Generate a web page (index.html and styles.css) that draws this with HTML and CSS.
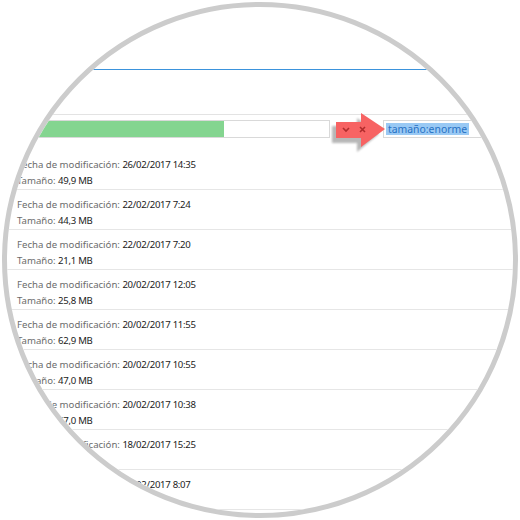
FILE: index.html
```html
<!DOCTYPE html>
<html lang="es">
<head>
<meta charset="utf-8">
<link rel="stylesheet" href="styles.css">
</head>
<body>
<div class="lens">
  <div class="titlebar"></div>
  <div class="toolbar">
    <div class="address"><div class="progress"></div></div>
    <div class="search"><span class="query">tamaño:enorme</span></div>
  </div>
  <svg class="arrow" width="60" height="46" viewBox="0 0 60 46">
    <defs>
      <filter id="blur" x="-20%" y="-20%" width="140%" height="140%"><feGaussianBlur stdDeviation="1.2"/></filter>
    </defs>
    <polygon points="3,14 28,14 28,6 50,22 28,40 28,31 3,31" fill="#000" opacity="0.28" filter="url(#blur)"/>
    <polygon points="7,10 32,10 32,1 56,17 32,35 32,26 7,26" fill="#f76363"/>
    <polyline points="14,16 17,19 20,16" fill="none" stroke="#b02c2c" stroke-width="1.6"/>
    <path d="M31,15 L36,20 M36,15 L31,20" stroke="#b02c2c" stroke-width="1.6"/>
  </svg>
  <ul class="list">
    <li class="row"><p><span class="k">Fecha de modificación:</span> <span class="v">26/02/2017 14:35</span></p><p><span class="k">Tamaño:</span> <span class="v">49,9 MB</span></p></li>
    <li class="row"><p><span class="k">Fecha de modificación:</span> <span class="v">22/02/2017 7:24</span></p><p><span class="k">Tamaño:</span> <span class="v">44,3 MB</span></p></li>
    <li class="row"><p><span class="k">Fecha de modificación:</span> <span class="v">22/02/2017 7:20</span></p><p><span class="k">Tamaño:</span> <span class="v">21,1 MB</span></p></li>
    <li class="row"><p><span class="k">Fecha de modificación:</span> <span class="v">20/02/2017 12:05</span></p><p><span class="k">Tamaño:</span> <span class="v">25,8 MB</span></p></li>
    <li class="row"><p><span class="k">Fecha de modificación:</span> <span class="v">20/02/2017 11:55</span></p><p><span class="k">Tamaño:</span> <span class="v">62,9 MB</span></p></li>
    <li class="row"><p><span class="k">Fecha de modificación:</span> <span class="v">20/02/2017 10:55</span></p><p><span class="k">Tamaño:</span> <span class="v">47,0 MB</span></p></li>
    <li class="row"><p><span class="k">Fecha de modificación:</span> <span class="v">20/02/2017 10:38</span></p><p><span class="k">Tamaño:</span> <span class="v">57,0 MB</span></p></li>
    <li class="row"><p><span class="k">Fecha de modificación:</span> <span class="v">18/02/2017 15:25</span></p><p><span class="k">Tamaño:</span> <span class="v">38,4 MB</span></p></li>
    <li class="row"><p><span class="k">Fecha de modificación:</span> <span class="v">17/02/2017 8:07</span></p><p><span class="k">Tamaño:</span> <span class="v">29,6 MB</span></p></li>
  </ul>
</div>
</body>
</html>
```
FILE: styles.css
```css
html, body {
  margin: 0;
  padding: 0;
  background: #ffffff;
}
.lens {
  position: relative;
  box-sizing: border-box;
  width: 516px;
  height: 516px;
  margin: 2px;
  border: 5px solid #cccccc;
  border-radius: 50%;
  overflow: hidden;
  background: #ffffff;
  font-family: "Noto Sans", "Open Sans", sans-serif;
  font-size: 9.6px;
}
.titlebar {
  height: 62px;
  border-bottom: 1px solid #3b93dc;
}
.toolbar {
  margin-top: 44px;
  border-top: 1px solid #e3e3e3;
  padding-top: 5px;
  display: flex;
  gap: 53px;
}
.address {
  box-sizing: border-box;
  width: 323px;
  height: 18px;
  border: 1px solid #d9d9d9;
  border-left: none;
}
.progress {
  width: 217px;
  height: 16px;
  background: #84d590;
}
.search {
  flex: 1;
  box-sizing: border-box;
  height: 18px;
  border: 1px solid #d9d9d9;
  border-right: none;
  padding: 2px 0 0 2px;
  font-size: 10.4px;
  line-height: 12px;
}
.query {
  display: inline-block;
  background: #99c9f4;
  color: #2771c4;
  padding: 0 2px;
}
.arrow {
  position: absolute;
  left: 322px;
  top: 105px;
}
.list {
  list-style: none;
  margin: 12px 0 0;
  padding: 0;
}
.row {
  box-sizing: border-box;
  height: 40px;
  padding: 7px 0 0 10px;
  border-bottom: 1px solid #e6e6e6;
}
.row p {
  margin: 0;
  line-height: 16px;
  white-space: nowrap;
}
.k {
  color: #6b6b6b;
}
.v {
  color: #222222;
  letter-spacing: -0.3px;
}
```
